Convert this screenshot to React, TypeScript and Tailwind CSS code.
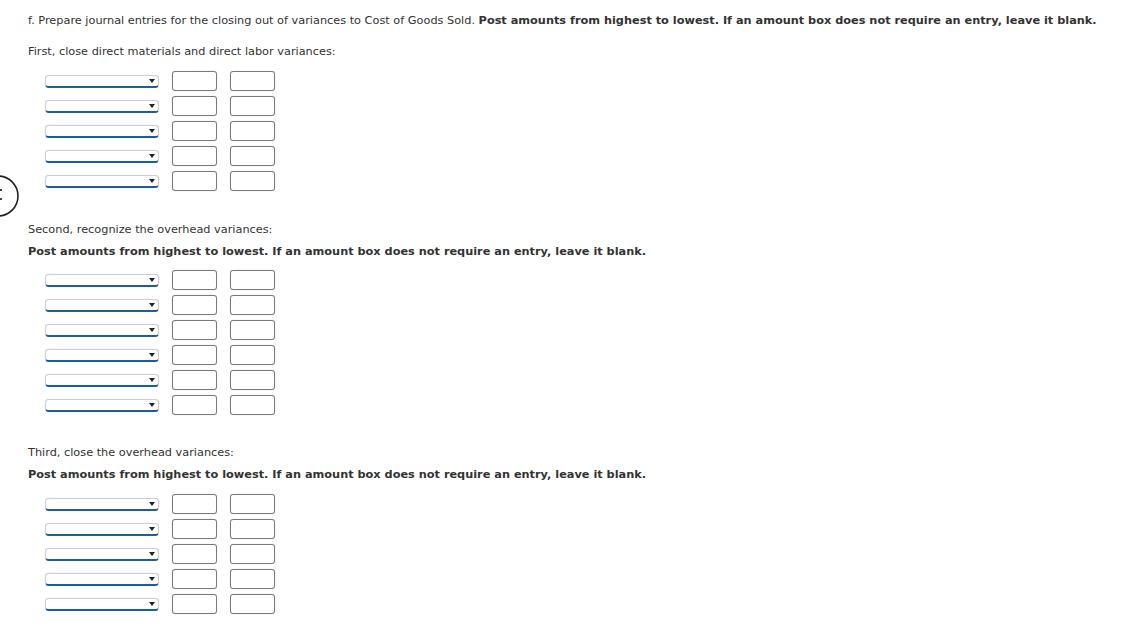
import React from "react";

const SECTIONS = [
  { intro: "First, close direct materials and direct labor variances:", rows: 5, bold: false },
  { intro: "Second, recognize the overhead variances:", rows: 6, bold: true },
  { intro: "Third, close the overhead variances:", rows: 5, bold: true },
];

const NOTE =
  "Post amounts from highest to lowest. If an amount box does not require an entry, leave it blank.";

function AccountSelect() {
  return (
    <div className="relative w-[114px] h-[13px] bg-white rounded-[4px] border border-[#cfcfcf] border-b-2 border-b-[#1d5d99] shadow-[0_0_1px_rgba(0,0,0,0.2)]">
      <svg
        className="absolute right-[3px] top-[3px]"
        width="6"
        height="4"
        viewBox="0 0 6 4"
      >
        <path d="M0 0 L6 0 L3 4 Z" fill="#222" />
      </svg>
    </div>
  );
}

function AmountBox() {
  return (
    <div className="w-[45px] h-[20px] bg-white rounded-[3px] border border-[#7a7a7a] shadow-[0_0_1px_rgba(0,0,0,0.3)]" />
  );
}

function EntryRows({ count }: { count: number }) {
  return (
    <div className="flex flex-col gap-[5px] pl-[17px]">
      {Array.from({ length: count }).map((_, i) => (
        <div key={i} className="flex items-center h-[20px]">
          <AccountSelect />
          <div className="ml-[13px]">
            <AmountBox />
          </div>
          <div className="ml-[13px]">
            <AmountBox />
          </div>
        </div>
      ))}
    </div>
  );
}

export default function App() {
  return (
    <div
      className="relative w-[1135px] h-[633px] overflow-hidden bg-white text-[#333] text-[11.3px] leading-[13px]"
      style={{ fontFamily: '"DejaVu Sans", Verdana, sans-serif' }}
    >
      {/* partly hidden circle on the left edge */}
      <svg className="absolute left-0 top-[174px]" width="24" height="44" viewBox="0 0 24 44">
        <circle cx="-2" cy="22" r="20" fill="none" stroke="#222" strokeWidth="1.6" />
        <rect x="0" y="15" width="2" height="2" fill="#444" />
        <rect x="0" y="24" width="2" height="2" fill="#444" />
      </svg>

      <div className="pl-[28px] pt-[14px]">
        <p>
          f. Prepare journal entries for the closing out of variances to Cost of Goods Sold.{" "}
          <span className="font-bold">{NOTE}</span>
        </p>

        <p className="mt-[18px]">{SECTIONS[0].intro}</p>
        <div className="mt-[13px]">
          <EntryRows count={SECTIONS[0].rows} />
        </div>

        <p className="mt-[32px]">{SECTIONS[1].intro}</p>
        <p className="mt-[9px] font-bold">{NOTE}</p>
        <div className="mt-[12px]">
          <EntryRows count={SECTIONS[1].rows} />
        </div>

        <p className="mt-[31px]">{SECTIONS[2].intro}</p>
        <p className="mt-[9px] font-bold">{NOTE}</p>
        <div className="mt-[13px]">
          <EntryRows count={SECTIONS[2].rows} />
        </div>
      </div>
    </div>
  );
}
